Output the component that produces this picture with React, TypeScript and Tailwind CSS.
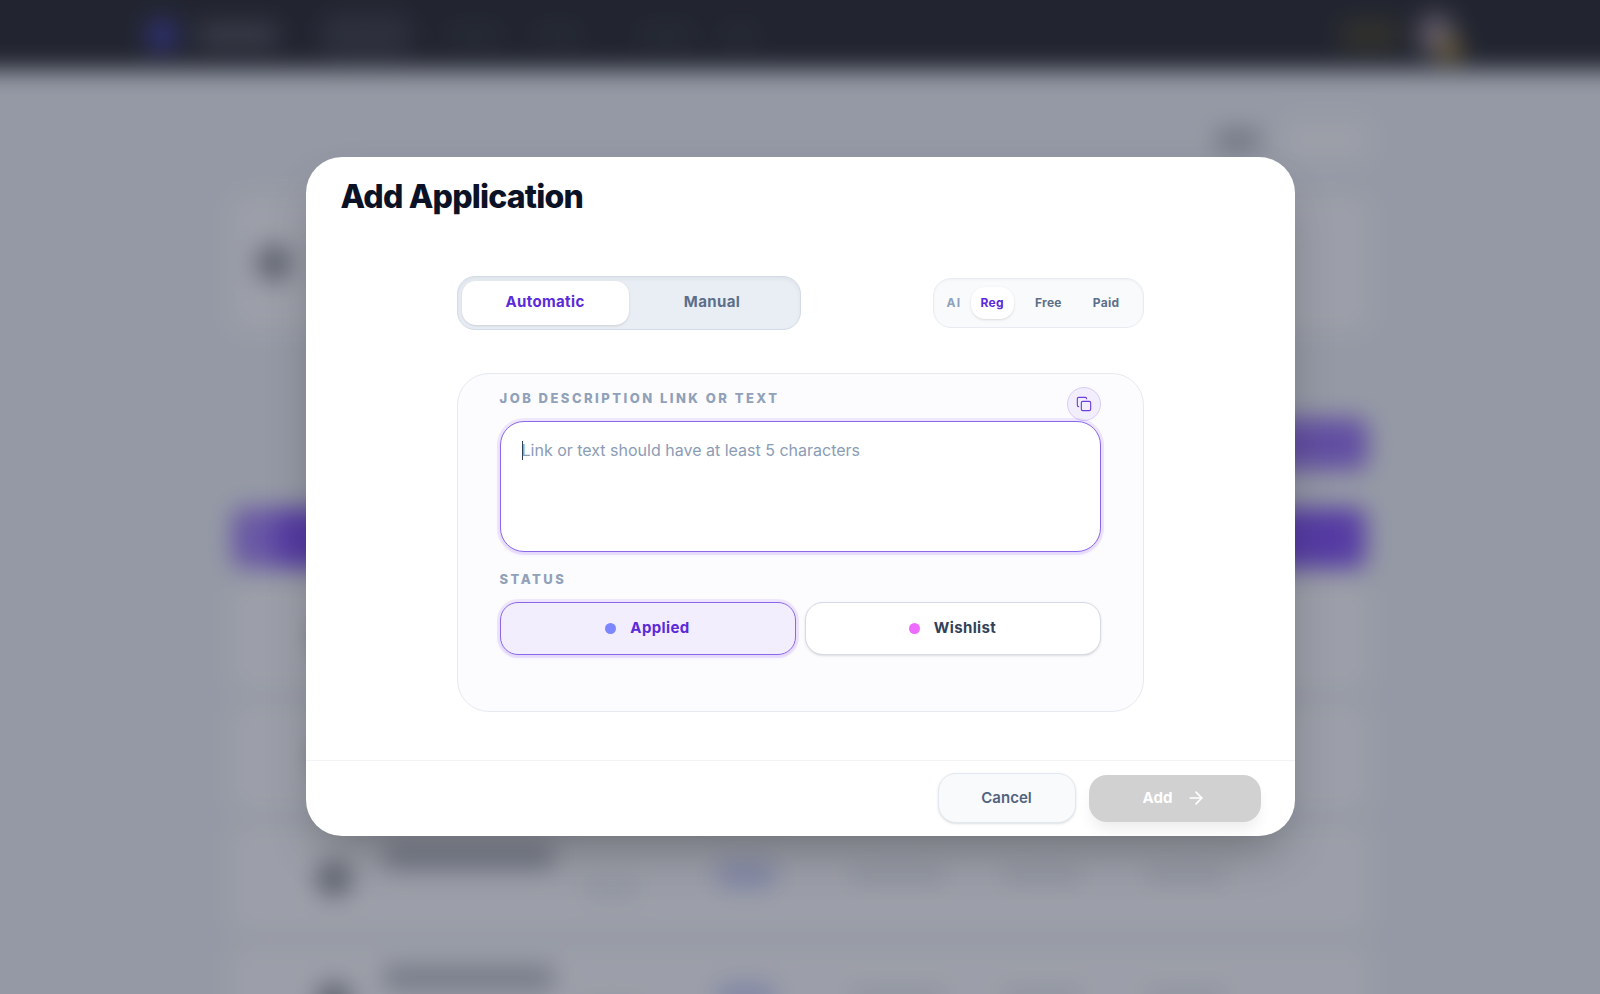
import { useState } from 'react';
import { ArrowRight, Copy } from 'lucide-react';

const MODES = ['Automatic', 'Manual'];
const AI_OPTIONS = ['Reg', 'Free', 'Paid'];
const STATUSES = [
  { name: 'Applied', dot: 'bg-[#7c86ff]' },
  { name: 'Wishlist', dot: 'bg-[#ed6bff]' },
];
const ROWS = [1, 2, 3, 4];

// The blurred layer is larger than the window so that its soft edges stay out of sight.
function Backdrop() {
  return (
    <div aria-hidden="true" className="absolute inset-0 overflow-hidden">
      <div className="absolute -inset-12 overflow-hidden bg-[#eef1f7] blur-[12px]">
        <div className="flex h-[118px] items-center bg-[#2f2f34] px-[194px] pt-12">
          <div className="h-8 w-8 rounded-full bg-[#4744a8]" />
          <div className="ml-5 h-6 w-20 rounded bg-[#57575d]" />
          <div className="ml-10 h-11 w-24 rounded-full bg-[#424249]" />
          <div className="ml-8 h-4 w-14 rounded bg-[#393d42]" />
          <div className="ml-8 h-4 w-12 rounded bg-[#393d42]" />
          <div className="ml-14 h-4 w-14 rounded bg-[#393d42]" />
          <div className="ml-7 h-4 w-9 rounded bg-[#393d42]" />
          <div className="ml-auto h-8 w-16 rounded-full bg-[#48432f]" />
          <div className="relative ml-4 h-11 w-9 rounded-full bg-[#948690]">
            <div className="absolute -right-2 -bottom-1 h-6 w-6 rounded-full bg-[#b09040]" />
          </div>
        </div>
        <div className="mx-auto max-w-[1136px] pt-[50px]">
          <div className="flex h-10 items-center justify-end gap-6">
            <div className="h-5 w-11 rounded bg-[#acafb7]" />
            <div className="h-10 w-[84px] rounded-xl bg-[#fbfbfd]" />
          </div>
          <div className="mt-9 flex h-[134px] items-center rounded-2xl bg-[#fbfbfd] px-6">
            <div className="h-9 w-9 rounded-full bg-[#94969c]" />
          </div>
          <div className="mt-[88px] ml-auto h-[52px] w-[240px] rounded-xl bg-[#9a74f2]" />
          <div className="mt-[38px] flex h-[60px] overflow-hidden rounded-xl">
            <div className="w-11 bg-[#a583f6]" />
            <div className="flex-1 bg-[#8454f4]" />
            <div className="w-2 bg-[#a583f6]" />
          </div>
          <div className="mt-4 flex flex-col gap-4">
            {ROWS.map((row) => (
              <div key={row} className="flex h-[105px] items-center rounded-2xl bg-[#fbfbfd] px-[84px]">
                <div className="h-9 w-9 rounded-full bg-[#94979d]" />
                <div className="mb-4 ml-8 w-[330px]">
                  <div className="h-6 w-[170px] rounded bg-[#b6bac4]" />
                  <div className="mt-3 ml-50 h-4 w-14 rounded bg-[#e4e8ee]" />
                </div>
                <div className="mb-2 h-7 w-16 rounded-full bg-[#cfd2f8]" />
                <div className="mb-2 ml-18 h-4 w-24 rounded bg-[#e2e5eb]" />
                <div className="mb-2 ml-14 h-4 w-20 rounded bg-[#e2e5eb]" />
                <div className="mb-2 ml-16 h-4 w-20 rounded bg-[#e2e5eb]" />
              </div>
            ))}
          </div>
        </div>
      </div>
    </div>
  );
}

export default function App() {
  const [mode, setMode] = useState('Automatic');
  const [ai, setAi] = useState('Reg');
  const [status, setStatus] = useState('Applied');
  const [description, setDescription] = useState('');

  const canAdd = description.trim().length >= 5;

  return (
    <div className="relative min-h-screen font-['Inter',sans-serif]">
      <Backdrop />
      <div className="relative flex min-h-screen items-center justify-center bg-slate-900/40 px-4 pb-0.5">
        <form
          role="dialog"
          aria-labelledby="dialog-title"
          onSubmit={(e) => e.preventDefault()}
          className="w-full max-w-[989px] overflow-hidden rounded-[36px] bg-white shadow-[0_24px_50px_-12px_rgba(0,0,0,0.3)]"
        >
          <h1
            id="dialog-title"
            className="px-[35px] pt-5 text-[32px] leading-10 font-extrabold tracking-tight text-[#0c1226]"
          >
            Add Application
          </h1>

          <div className="mx-auto max-w-[687px] pt-[59px] pb-12">
            <div className="flex items-center justify-between">
              <div className="flex h-[54px] w-[344px] rounded-[18px] border border-[#d3dbe6] bg-[#e9edf4] p-1 shadow-[inset_0_2px_4px_rgba(0,0,0,0.05)]">
                {MODES.map((item) => (
                  <button
                    key={item}
                    type="button"
                    onClick={() => setMode(item)}
                    className={`flex-1 rounded-[14px] text-[15px] font-bold tracking-wide ${
                      mode === item ? 'bg-white text-[#5b2bd9] shadow-sm' : 'text-[#5c6f8a]'
                    }`}
                  >
                    {item}
                  </button>
                ))}
              </div>

              <div className="flex h-[50px] w-[211px] items-center rounded-[18px] border border-[#e8ecf2] bg-[#f9fafc] pl-[13px] shadow-[inset_0_1px_3px_rgba(0,0,0,0.04)]">
                <span className="w-6 text-xs font-bold tracking-widest text-[#90a1b9]">AI</span>
                <div className="flex gap-[11px]">
                  {AI_OPTIONS.map((item) => (
                    <button
                      key={item}
                      type="button"
                      onClick={() => setAi(item)}
                      className={`h-8 rounded-[14px] px-[10px] text-xs font-bold tracking-wide ${
                        ai === item ? 'bg-white text-[#5b2bd9] shadow-sm' : 'text-[#5c6f8a]'
                      }`}
                    >
                      {item}
                    </button>
                  ))}
                </div>
              </div>
            </div>

            <div className="mt-[43px] rounded-[32px] border border-[#e6e9f0] bg-[#fcfcff] px-[42px] pt-[13px] pb-14">
              <div className="flex items-start justify-between">
                <label
                  htmlFor="description"
                  className="text-[13px] leading-[22px] font-extrabold tracking-[0.19em] text-[#90a1b9]"
                >
                  JOB DESCRIPTION LINK OR TEXT
                </label>
                <button
                  type="button"
                  aria-label="Paste from clipboard"
                  className="flex h-[34px] w-[34px] items-center justify-center rounded-full border border-[#d9ccfb] bg-[#f3eefe] text-[#6d3fdc]"
                >
                  <Copy className="h-4 w-4" strokeWidth={1.7} />
                </button>
              </div>
              <div className="relative">
                <textarea
                  id="description"
                  autoFocus
                  value={description}
                  onChange={(e) => setDescription(e.target.value)}
                  placeholder="Link or text should have at least 5 characters"
                  className={`block h-[131px] w-full resize-none rounded-3xl border border-[#8b68ea] bg-white px-[21px] py-4 text-base text-slate-800 shadow-[0_0_0_3px_rgba(124,58,237,0.1),0_2px_4px_rgba(124,58,237,0.12)] outline-none placeholder:text-[#8b9cb6] ${
                    description ? 'caret-slate-800' : 'caret-transparent'
                  }`}
                />
                {!description && (
                  <span className="pointer-events-none absolute top-5 left-[22px] h-[19px] w-px bg-slate-700" />
                )}
              </div>
              <div
                id="status-label"
                className="mt-4 text-[13px] leading-[22px] font-extrabold tracking-[0.19em] text-[#90a1b9]"
              >
                STATUS
              </div>
              <div role="group" aria-labelledby="status-label" className="mt-3 grid grid-cols-2 gap-[9px]">
                {STATUSES.map((item) => (
                  <button
                    key={item.name}
                    type="button"
                    onClick={() => setStatus(item.name)}
                    className={`flex h-[53px] items-center justify-center gap-[14px] rounded-[18px] border text-[15px] font-bold tracking-wide ${
                      status === item.name
                        ? 'border-[#8b68ea] bg-[#f3eefe] text-[#5b2bd9] shadow-[0_0_0_3px_rgba(124,58,237,0.1),0_2px_4px_rgba(124,58,237,0.12)]'
                        : 'border-[#d5dae4] bg-white text-[#314158] shadow-sm'
                    }`}
                  >
                    <span className={`h-[11px] w-[11px] rounded-full ${item.dot}`} />
                    {item.name}
                  </button>
                ))}
              </div>
            </div>
          </div>

          <div className="flex h-[76px] items-center justify-end gap-[13px] border-t border-[#f1f3f6] px-[34px]">
            <button
              type="button"
              className="h-[50px] w-[138px] rounded-[18px] border border-[#e2e8f0] bg-[#f8fafc] text-[15px] font-semibold text-[#52637e] shadow-sm"
            >
              Cancel
            </button>
            <button
              type="submit"
              disabled={!canAdd}
              className="flex h-[47px] w-[172px] items-center justify-center gap-[14px] rounded-[18px] bg-[#7c3aed] text-[15px] font-bold text-white shadow-[0_10px_15px_-3px_rgba(0,0,0,0.08)] disabled:bg-[#d1d1d1]"
            >
              Add
              <ArrowRight className="h-5 w-5" />
            </button>
          </div>
        </form>
      </div>
    </div>
  );
}
